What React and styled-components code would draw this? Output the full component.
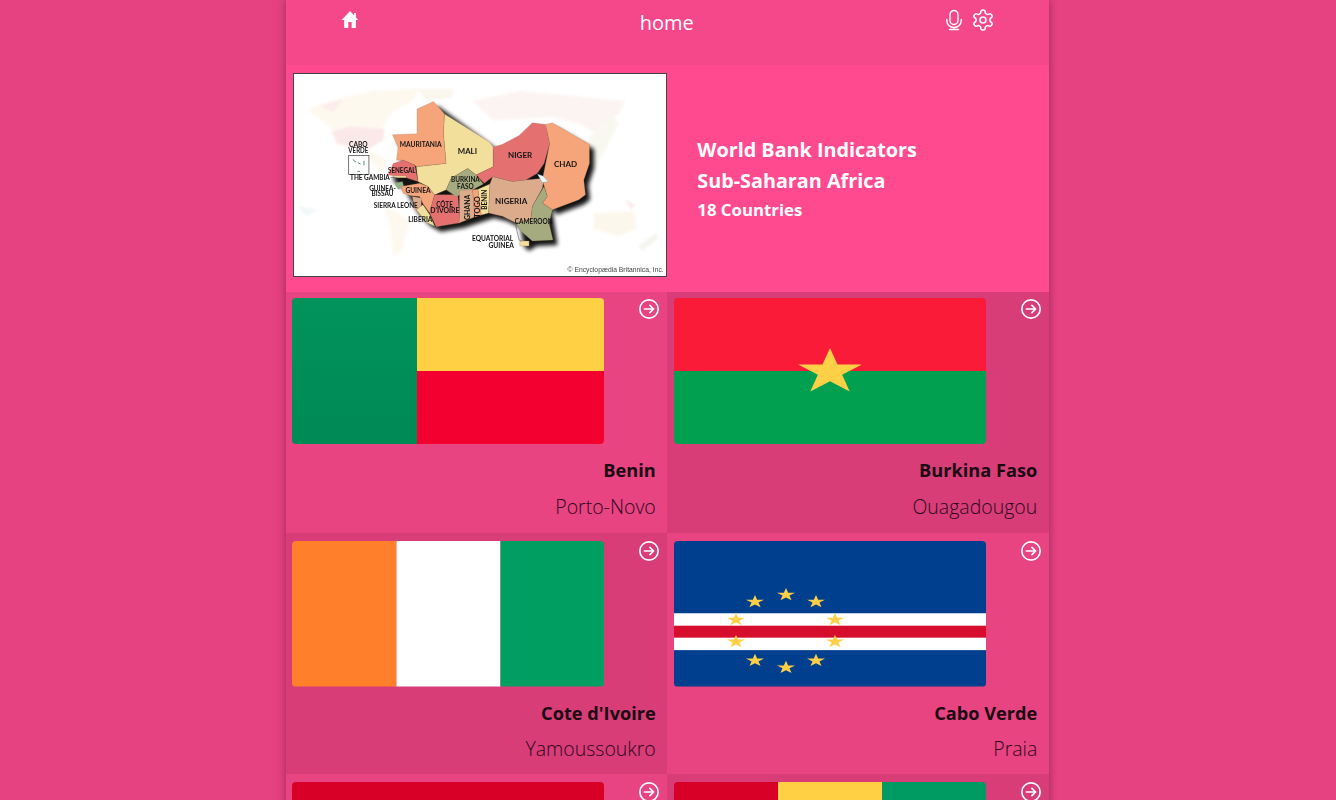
import React from 'react';
import styled, { createGlobalStyle } from 'styled-components';

const Global = createGlobalStyle`
  html, body { margin: 0; height: 800px; overflow: hidden; background: #e64180; }
  body { font-family: "Open Sans", "Noto Sans", sans-serif; }
`;
const Shell = styled.div`
  width: 763px; margin: 0 auto 0 285.8px;
  box-shadow: 0 0 8px rgba(0,0,0,.35);
`;
const Header = styled.header`
  height: 65px; background: #f5488a; color: #fff; box-sizing: border-box;
  display: grid; grid-template-columns: 1fr auto 1fr; align-items: start;
`;
const HomeSlot = styled.div` padding: 8px 0 0 54.5px; display: flex; `;
const Title = styled.h1` margin: 0; padding: 9px 1px 0 0; font-size: 20px; line-height: 27px; font-weight: 400; `;
const Tools = styled.div` display: flex; justify-content: flex-end; gap: 7px; padding: 8px 54px 0 0; align-items: center; `;
const Hero = styled.section`
  height: 227px; background: #ff4a90; display: grid; grid-template-columns: 381.5px 1fr; align-items: start;
`;
const MapFrame = styled.div`
  margin: 8px 0 0 7.2px; width: 374px; height: 204px; box-sizing: border-box; border: 1px solid #444; background: #fff; overflow: hidden;
  svg { display: block; width: 100%; height: 100%; }
`;
const HeroText = styled.div` padding: 69px 0 0 30px; color: #fff; font-weight: 700; `;
const HeroLine = styled.div` font-size: ${p => p.$size}px; line-height: ${p => p.$lh}px; `;
const Grid = styled.div` display: grid; grid-template-columns: 1fr 1fr; `;
const Cell = styled.article`
  position: relative; height: 241px; box-sizing: border-box; padding: ${p => p.$first ? '6px' : '8px'} 11.5px 0 6.5px;
  background: ${p => p.$dark ? '#d83d78' : '#e84482'};
`;
const Flag = styled.div`
  width: 312px; height: ${p => p.$first ? '146px' : '145.5px'}; border-radius: 4px; overflow: hidden;
  svg { display: block; width: 100%; height: 100%; }
`;
const Go = styled.span` position: absolute; top: ${p => p.$first ? '6px' : '7px'}; right: 7px; display: flex; color: #fff; `;
const Name = styled.div` margin-top: 13px; text-align: right; font-size: 18.200px; line-height: 26px; font-weight: 700; color: #1a0a12; `;
const Capital = styled.div` margin-top: 10.500px; text-align: right; font-size: 19.500px; line-height: 26px; font-weight: 300; color: #2e081b; `;

const HomeIcon = () => (
  <svg width="20" height="24" viewBox="0 0 24 24" preserveAspectRatio="none" fill="#fff">
    <path d="M10 20v-6h4v6h5v-8h3l-3-2.700V5h-2v2.500L12 3 2 12h3v8z"/>
  </svg>
);
const MicIcon = () => (
  <svg width="20" height="22" viewBox="0 0 20 22" fill="none" stroke="#fff" strokeWidth="1.400" strokeLinecap="round">
    <rect x="6" y="1.500" width="8" height="14" rx="4"/>
    <path d="M2.800 10.500v1.200a7.200 6.800 0 0 0 14.400 0v-1.200M10 18.500V20.500M5.500 20.500h9"/>
  </svg>
);
const GearIcon = () => (
  <svg width="24" height="24" viewBox="0 0 24 24" fill="none" stroke="#fff" strokeWidth="1.600" strokeLinecap="round" strokeLinejoin="round">
    <path d="M12.220 2h-.44a2 2 0 0 0-2 2v.18a2 2 0 0 1-1 1.730l-.43.25a2 2 0 0 1-2 0l-.15-.08a2 2 0 0 0-2.730.73l-.22.38a2 2 0 0 0 .73 2.730l.15.1a2 2 0 0 1 1 1.720v.51a2 2 0 0 1-1 1.740l-.15.09a2 2 0 0 0-.73 2.730l.22.38a2 2 0 0 0 2.730.73l.15-.08a2 2 0 0 1 2 0l.43.25a2 2 0 0 1 1 1.730V20a2 2 0 0 0 2 2h.44a2 2 0 0 0 2-2v-.18a2 2 0 0 1 1-1.730l.43-.25a2 2 0 0 1 2 0l.15.08a2 2 0 0 0 2.730-.73l.22-.39a2 2 0 0 0-.73-2.730l-.15-.08a2 2 0 0 1-1-1.740v-.5a2 2 0 0 1 1-1.740l.15-.09a2 2 0 0 0 .73-2.730l-.22-.38a2 2 0 0 0-2.730-.73l-.15.08a2 2 0 0 1-2 0l-.43-.25a2 2 0 0 1-1-1.730V4a2 2 0 0 0-2-2z"/>
    <circle cx="12" cy="12" r="3"/>
  </svg>
);
const ArrowIcon = () => (
  <svg width="22" height="22" viewBox="0 0 24 24" fill="none" stroke="#fff" strokeWidth="1.800" strokeLinecap="round" strokeLinejoin="round">
    <circle cx="12" cy="12" r="10"/>
    <path d="M7 12h10M13 8l4 4-4 4"/>
  </svg>
);

const Star = ({ x, y, r, fill = '#ffd045' }) => {
  const pts = [];
  for (let i = 0; i < 10; i++) {
    const a = -Math.PI / 2 + i * Math.PI / 5;
    const q = i % 2 ? r * 0.382 : r;
    pts.push(`${(x + q * Math.cos(a)).toFixed(2)},${(y + 0.72 * q * Math.sin(a)).toFixed(2)}`);
  }
  return <polygon points={pts.join(' ')} fill={fill} />;
};

const FlagArt = ({ children }) => <svg viewBox="0 0 312 146" preserveAspectRatio="none">{children}</svg>;

const Benin = () => (
  <FlagArt>
    <defs><linearGradient id="bg" x1="0" y1="0" x2="0" y2="1"><stop offset="0" stopColor="#00935a"/><stop offset="1" stopColor="#008a56"/></linearGradient></defs>
    <rect width="125" height="146" fill="url(#bg)"/>
    <rect x="125" width="187" height="73" fill="#ffcf44"/>
    <rect x="125" y="73" width="187" height="73" fill="#f40030"/>
  </FlagArt>
);
const Burkina = () => (
  <FlagArt>
    <rect width="312" height="73" fill="#fa1b38"/>
    <rect y="73" width="312" height="73" fill="#00a050"/>
    <Star x={156} y={74} r={33.500}/>
  </FlagArt>
);
const Ivory = () => (
  <FlagArt>
    <rect width="104.500" height="146" fill="#ff7f2a"/>
    <rect x="104.500" width="104" height="146" fill="#fff"/>
    <rect x="208.500" width="103.500" height="146" fill="#009e60"/>
  </FlagArt>
);
const verdeStars = [[112,54],[81,61],[142,61],[62,79],[161,79],[62,101],[161,101],[81,120],[142,120],[112,127]];
const Verde = () => (
  <FlagArt>
    <rect width="312" height="146" fill="#003f8e"/>
    <rect y="72.500" width="312" height="37" fill="#fff"/>
    <rect y="85" width="312" height="12" fill="#d70d2e"/>
    {verdeStars.map(([x, y]) => <Star key={`${x}-${y}`} x={x} y={y} r={9.500}/>)}
  </FlagArt>
);
const Gambia = () => (
  <FlagArt>
    <rect width="312" height="49" fill="#d80027"/>
    <rect y="49" width="312" height="48" fill="#0a3f8e"/>
    <rect y="97" width="312" height="49" fill="#009a55"/>
  </FlagArt>
);
const Guinea = () => (
  <FlagArt>
    <rect width="104" height="146" fill="#d80027"/>
    <rect x="104" width="104" height="146" fill="#ffcf44"/>
    <rect x="208" width="104" height="146" fill="#009a63"/>
  </FlagArt>
);

const countries = [
  { id: 'ben', name: 'Benin', capital: 'Porto-Novo', Art: Benin, first: true },
  { id: 'bfa', name: 'Burkina Faso', capital: 'Ouagadougou', Art: Burkina, dark: true, first: true },
  { id: 'civ', name: "Cote d'Ivoire", capital: 'Yamoussoukro', Art: Ivory, dark: true },
  { id: 'cpv', name: 'Cabo Verde', capital: 'Praia', Art: Verde },
  { id: 'gmb', Art: Gambia },
  { id: 'gin', Art: Guinea, dark: true },
];

const shadowPts = '318,403 392,400 392,325 442,302 610,425 622,440 650,432 700,405 740,367 800,367 912,432 912,490 895,540 900,585 880,600 800,630 785,610 802,722 740,725 715,740 700,725 690,670 650,650 610,640 520,670 450,682 420,665 385,630 345,560 305,525 330,480 335,440';

const L = ({ x, y, w, s = 21, rot, children }) => (
  <text x={x} y={y} fontSize={s} textAnchor="middle" textLength={w} lengthAdjust="spacingAndGlyphs" fontWeight="700"
    fontFamily="Lato, 'Liberation Sans', sans-serif" fill="#141414"
    transform={rot ? `rotate(${rot} ${x} ${y})` : undefined}>{children}</text>
);

const WestAfricaMap = () => (
  <svg viewBox="21 219 1122 612" preserveAspectRatio="none">
    <defs>
      <filter id="soft" x="-5%" y="-5%" width="110%" height="110%"><feGaussianBlur stdDeviation="1.200"/></filter>
      <filter id="pale" x="-5%" y="-5%" width="110%" height="110%"><feGaussianBlur stdDeviation="3"/></filter>
      <filter id="shade" x="-10%" y="-10%" width="120%" height="120%"><feGaussianBlur stdDeviation="6"/></filter>
    </defs>
    <g filter="url(#pale)" opacity=".6">
      <polygon points="60,325 150,295 260,270 400,262 380,300 310,340 290,385 250,430 200,420 150,430 130,380 90,350" fill="#fdf6e6"/>
      <polygon points="135,395 185,378 295,385 290,420 250,445 190,440 150,430" fill="#f9dcdc"/>
      <polygon points="100,315 170,295 140,335" fill="#fbe0de"/>
      <polygon points="395,265 500,262 500,290 420,300" fill="#f8f2e4"/>
      <polygon points="240,445 300,480 290,520 250,480" fill="#fdf6e6"/>
      <polygon points="295,620 370,660 350,750 320,775 310,690" fill="#fdf6e6"/>
      <polygon points="560,300 700,270 1020,300 1000,340 930,400 880,370 800,350 620,360" fill="#fbeeea"/>
      <polygon points="910,410 985,340 1000,370 960,450 930,500 905,470" fill="#f5f5e8"/>
      <polygon points="925,640 1050,635 1055,690 1000,710 925,690" fill="#faf3e0"/>
      <polygon points="1060,740 1115,700 1118,720 1070,755" fill="#ecefe2"/>
      <polygon points="1020,600 1050,615 1040,630" fill="#f9dcdc"/>
      <polygon points="30,620 90,630 60,650" fill="#e9f2f2"/>
    </g>
    <polygon points={shadowPts} transform="translate(14 15)" fill="#000" filter="url(#shade)" opacity=".92"/>
    <g filter="url(#soft)" stroke="#a8775c" strokeWidth=".8" strokeLinejoin="round">
      <polygon fill="#f6a47a" points="318,403 392,400 392,325 442,302 475,340 472,400 480,490 390,500 385,495 350,480 330,480 335,440"/>
      <polygon fill="#f2df9c" points="475,340 610,425 622,440 622,500 570,525 545,505 495,535 480,570 445,585 425,560 395,545 390,500 480,490 472,400"/>
      <polygon fill="#e4716f" points="622,440 650,432 700,405 740,367 780,372 792,430 775,490 755,520 720,540 680,545 620,530 595,550 570,525 622,500"/>
      <polygon fill="#f6a47a" points="780,372 800,367 912,432 912,490 895,540 900,585 880,600 800,630 770,610 785,590 770,540 792,430"/>
      <polygon fill="#e4716f" points="320,490 350,480 385,495 395,545 350,530 305,525"/>
      <polygon fill="#f2df9c" points="322,527 360,528 358,533 322,533"/>
      <polygon fill="#8db28a" points="325,550 348,545 352,560 335,568"/>
      <polygon fill="#f6a47a" points="345,560 400,550 425,560 445,585 430,640 410,612 400,590 375,588 350,580"/>
      <polygon fill="#dcab8c" points="378,590 405,595 405,622 385,630"/>
      <polygon fill="#f2df9c" points="390,630 410,615 430,645 445,680 420,668"/>
      <polygon fill="#e4716f" points="445,585 515,585 522,670 450,682 430,640"/>
      <polygon fill="#a5ab7f" points="495,535 545,505 570,525 592,552 560,570 510,590 480,570"/>
      <polygon fill="#dcab8c" points="520,572 560,570 566,652 520,670"/>
      <polygon fill="#f6a47a" points="560,570 576,568 586,646 566,652"/>
      <polygon fill="#f2df9c" points="576,568 612,552 608,640 586,646"/>
      <polygon fill="#dcab8c" points="620,530 680,545 720,540 775,535 770,565 740,620 735,660 690,670 650,650 608,640 612,552"/>
      <polygon fill="#a5ab7f" points="775,560 785,590 770,610 800,630 790,670 802,722 740,725 705,695 690,670 735,660 740,620"/>
      <polygon fill="#f2df9c" points="702,725 730,725 730,740 702,740"/>
      <polygon fill="#e9f6f8" stroke="#4f8a9c" points="755,522 772,528 788,545 770,548"/>
    </g>
    <rect x="186" y="466" width="61" height="57" fill="#fff" stroke="#333" strokeWidth="2"/>
    <path d="M198 478l10 8M214 488l8 4M232 482v14M212 514h8" stroke="#5a8a7a" strokeWidth="3" fill="none"/>
    <path d="M312 533h20M690 680l10 42 8 4" stroke="#333" strokeWidth="1.500" fill="none"/>
    <g style={{ filter: 'blur(.25px)' }}>
      <L x={215} y={441} w={56}>CABO</L>
      <L x={215} y={459} w={60}>VERDE</L>
      <L x={403} y={441} w={126}>MAURITANIA</L>
      <L x={544} y={460} w={58}>MALI</L>
      <L x={703} y={473} w={73}>NIGER</L>
      <L x={840} y={500} w={70}>CHAD</L>
      <L x={346} y={518} w={83}>SENEGAL</L>
      <L x={250} y={541} w={120}>THE GAMBIA</L>
      <L x={538} y={547} w={87}>BURKINA</L>
      <L x={538} y={566} w={50}>FASO</L>
      <L x={288} y={572} w={80}>GUINEA-</L>
      <L x={288} y={590} w={66}>BISSAU</L>
      <L x={395} y={581} w={76}>GUINEA</L>
      <L x={676} y={612} w={97}>NIGERIA</L>
      <L x={328} y={625} w={133}>SIERRA LEONE</L>
      <L x={475} y={622} w={50}>CÔTE</L>
      <L x={476} y={641} w={88}>D'IVOIRE</L>
      <L x={402} y={666} w={73}>LIBERIA</L>
      <L x={552} y={623} w={77} rot={-90}>GHANA</L>
      <L x={582} y={622} w={65} rot={-90}>TOGO</L>
      <L x={604} y={600} w={60} rot={-90}>BENIN</L>
      <L x={744} y={674} w={114}>CAMEROON</L>
      <L x={620} y={726} w={124}>EQUATORIAL</L>
      <L x={646} y={746} w={77}>GUINEA</L>
      <text x="1136" y="820" fontSize="20" textAnchor="end" textLength="290" lengthAdjust="spacingAndGlyphs" fontFamily="'Liberation Sans', sans-serif" fill="#444">© Encyclopædia Britannica, Inc.</text>
    </g>
  </svg>
);

export default function App() {
  return (
    <>
      <Global />
      <Shell>
        <Header>
          <HomeSlot><HomeIcon /></HomeSlot>
          <Title>home</Title>
          <Tools><MicIcon /><GearIcon /></Tools>
        </Header>
        <Hero>
          <MapFrame><WestAfricaMap /></MapFrame>
          <HeroText>
            <HeroLine $size={19.800} $lh={31}>World Bank Indicators</HeroLine>
            <HeroLine $size={19.800} $lh={31}>Sub-Saharan Africa</HeroLine>
            <HeroLine $size={16.800} $lh={27}>18 Countries</HeroLine>
          </HeroText>
        </Hero>
        <Grid>
          {countries.map(({ id, name, capital, Art, dark, first }) => (
            <Cell key={id} $dark={dark} $first={first}>
              <Flag $first={first}><Art /></Flag>
              <Go $first={first}><ArrowIcon /></Go>
              {name && <Name>{name}</Name>}
              {capital && <Capital>{capital}</Capital>}
            </Cell>
          ))}
        </Grid>
      </Shell>
    </>
  );
}
